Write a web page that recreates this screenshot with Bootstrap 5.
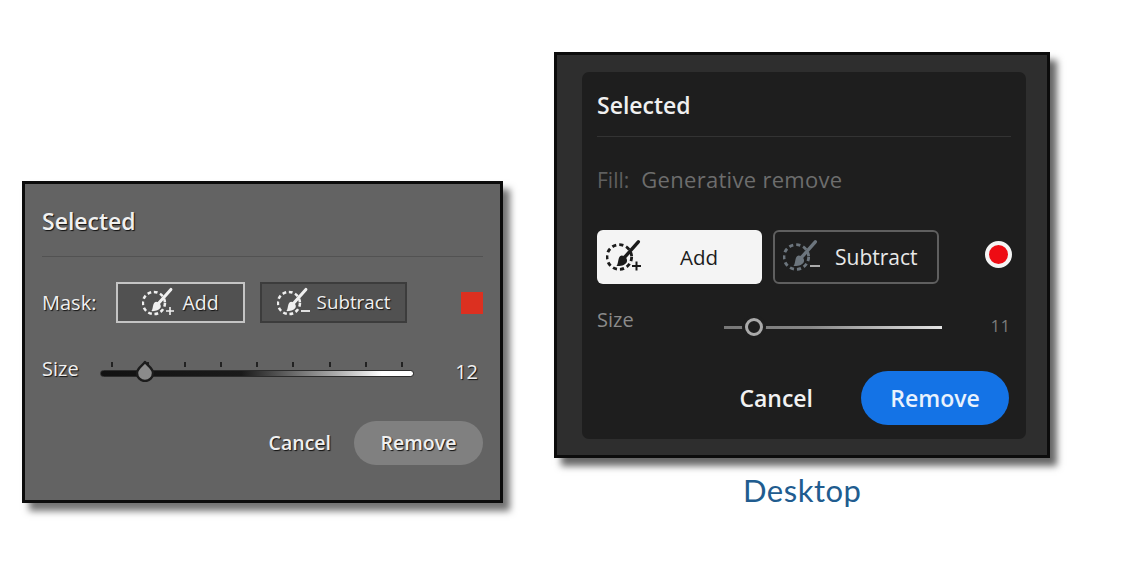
<!DOCTYPE html>
<html lang="en">
<head>
  <meta charset="UTF-8" />
  <meta name="viewport" content="width=device-width, initial-scale=1.0"/>
  <title>Selected panels</title>
  <link href="https://cdn.jsdelivr.net/npm/bootstrap@5.3.0/dist/css/bootstrap.min.css" rel="stylesheet" />
  <style>
    body {
      background-color: #fff;
      font-family: "Open Sans", "Noto Sans", sans-serif;
      overflow: hidden;
    }
    .stage { padding-left: 22px; gap: 51px; height: 581px; }

    /* left panel (grey) */
    .panel-grey {
      width: 481px; height: 322px; margin-top: 181px;
      background-color: #636363; border: 3px solid #0c0c0c;
      box-shadow: 7px 8px 7px rgba(0,0,0,.55);
      padding: 0 17px 0 17px; color: #f0f0f0;
      text-shadow: 1px 1px 1px #111;
    }
    .panel-grey .title { font-size: 23px; font-weight: 600; line-height: 30px; margin-top: 22px; }
    .panel-grey .rule { height: 1px; background-color: #525252; margin-top: 20px; }
    .mask-row { margin-top: 25px; height: 41px; }
    .mask-label { font-size: 20px; width: 74px; }
    .mode-btn {
      border-radius: 0; height: 41px; padding: 0; font-size: 19.5px; line-height: 1;
      color: #f0f0f0; background-color: #515151; text-shadow: inherit;
      display: flex; align-items: center; justify-content: center; gap: 6px;
    }
    .mode-add { width: 129px; border: 2px solid #c4c4c4; }
    .mode-sub { width: 147px; border: 2px solid #3c3c3c; margin-left: 15px; font-size: 18.8px; }
    .swatch { width: 22px; height: 22px; background-color: #dc3020; margin-left: auto; }
    .size-row { margin-top: 27px; height: 40px; }
    .size-label { font-size: 20px; width: 58px; margin-top: -2px; }
    .slider-grey { width: 314px; position: relative; height: 24px; margin-top: 8px; }
    .tick-row { padding: 0 11px; height: 5px; }
    .tick-row span { width: 2px; height: 5px; background-color: #222; }
    .track-grey {
      height: 7px; margin-top: 3px; border-radius: 4px; border: 1px solid #2c2c2c;
      background: linear-gradient(90deg, #111 0%, #1a1a1a 45%, #aaa 75%, #fff 90%);
    }
    .knob-grey { position: absolute; left: 34px; top: -2px; width: 22px; height: 22px; }
    .size-val { font-size: 20px; margin-left: auto; margin-right: 5px; margin-top: 3px; }
    .foot-grey { margin-top: 31px; }
    .cancel-grey { font-size: 19.5px; font-weight: 600; color: #f0f0f0; text-shadow: inherit; padding: 0; margin-right: 23px; border: 0; }
    .remove-grey {
      width: 129px; height: 44px; padding: 0; border: 0; border-radius: 22px;
      background-color: #808080; color: #f0f0f0; font-size: 19.5px; font-weight: 600; text-shadow: inherit;
    }

    /* right panel (dark) */
    .panel-dark {
      width: 496px; height: 406px; margin-top: 52px;
      background-color: #2e2e2e; border: 3px solid #0c0c0c;
      box-shadow: 7px 8px 7px rgba(0,0,0,.6);
      padding: 17px 21px 16px 25px;
    }
    .panel-inner {
      height: 367px; background-color: #1e1e1e; border-radius: 7px;
      padding: 0 15px; color: #f0f0f0;
    }
    .panel-inner .title { font-size: 23px; font-weight: 600; line-height: 30px; margin-top: 14px; }
    .panel-inner .rule { height: 1px; background-color: #333; margin-top: 16px; }
    .fill-row { margin-top: 27px; font-size: 22px; line-height: 30px; color: #6d6d6d; letter-spacing: .3px; }
    .fill-row .fill-label { font-size: 21px; margin-right: 12px; letter-spacing: 0; color: #5f5f5f; }
    .mode-row { margin-top: 35px; height: 54px; }
    .dark-btn {
      height: 54px; border-radius: 6px; padding: 0; font-size: 20.5px; line-height: 1;
      display: flex; align-items: center;
    }
    .dark-add { width: 165px; background-color: #f4f4f4; color: #1b1b1b; border: 0; padding-left: 9px; }
    .dark-add svg { margin-right: 36px; }
    .dark-sub { width: 166px; margin-left: 11px; background-color: transparent; color: #e8e8e8; border: 2px solid #5f5f5f; padding-left: 8px; font-size: 21px; }
    .dark-sub svg { margin-right: 14px; }
    .rec-dot {
      width: 27px; height: 27px; border-radius: 50%; background-color: #ee0c14;
      border: 4px solid #f4f4f4; margin-left: auto; margin-right: -1px; margin-top: -6px;
    }
    .size-dark { margin-top: 21px; height: 30px; position: relative; }
    .size-dark .lbl { font-size: 20px; color: #8a8a8a; width: 127px; margin-top: 0; }
    .slider-dark { width: 218px; height: 3px; position: relative; margin-top: 21px;
      background: linear-gradient(90deg, #777 0%, #888 40%, #e4e4e4 100%); }
    .knob-dark {
      position: absolute; left: 21px; top: -8px; width: 18px; height: 18px; border-radius: 50%;
      background-color: #1e1e1e; border: 3px solid #aaa; box-shadow: 0 0 0 3px #1e1e1e;
    }
    .val-dark { font-size: 16px; color: #7d7d7d; margin-left: auto; letter-spacing: 1px; margin-top: 9px; }
    .foot-dark { margin-top: 36px; padding-right: 2px; }
    .cancel-dark { font-size: 23px; font-weight: 600; color: #f2f2f2; padding: 0; border: 0; margin-right: 48px; }
    .remove-dark {
      width: 148px; height: 54px; padding: 0; border: 0; border-radius: 27px;
      background-color: #1473e6; color: #e9f2fd; font-size: 23px; font-weight: 600;
    }
    .caption { font-family: "Lato", sans-serif; font-size: 31px; line-height: 36px; color: #215c8f; margin-top: 14px; letter-spacing: .5px; padding-left: 189px; }
  </style>
</head>
<body>

  <svg width="0" height="0" class="d-block">
    <symbol id="brush" viewBox="0 0 40 40">
      <circle cx="14" cy="20" r="13" fill="none" stroke="currentColor" stroke-width="3" stroke-dasharray="4.4 3.2"/>
      <path d="M34 4 19 21" fill="none" stroke="currentColor" stroke-width="3.6" stroke-linecap="round"/>
      <path d="M16.500 18.500c3.500 0 6.500 3.500 5.500 6.500-1 3-6 5-11 4.500 2.500-2 1-10.500 5.500-11z" fill="currentColor"/>
    </symbol>
  </svg>

  <div class="stage d-flex align-items-start">

    <!-- grey panel -->
    <div class="panel-grey flex-shrink-0">
      <div class="title">Selected</div>
      <div class="rule"></div>
      <div class="mask-row d-flex align-items-center">
        <span class="mask-label">Mask:</span>
        <button class="btn mode-btn mode-add">
          <svg width="34" height="34"><use href="#brush"/><path d="M24 25h8M28 21v8" stroke="currentColor" stroke-width="1.6"/></svg>
          <span>Add</span>
        </button>
        <button class="btn mode-btn mode-sub">
          <svg width="34" height="34"><use href="#brush"/><path d="M24 25h9" stroke="currentColor" stroke-width="1.8"/></svg>
          <span>Subtract</span>
        </button>
        <span class="swatch"></span>
      </div>
      <div class="size-row d-flex align-items-center">
        <span class="size-label">Size</span>
        <div class="slider-grey">
          <div class="tick-row d-flex justify-content-between">
            <span></span><span></span><span></span><span></span><span></span><span></span><span></span><span></span><span></span>
          </div>
          <div class="track-grey"></div>
          <svg class="knob-grey" viewBox="0 0 22 22">
            <path d="M11 2 C13 5 19 8 19 13 A8 8 0 0 1 3 13 C3 8 9 5 11 2 Z" fill="#8b8b8b" stroke="#1c1c1c" stroke-width="2.4" stroke-linejoin="round"/>
          </svg>
        </div>
        <span class="size-val">12</span>
      </div>
      <div class="foot-grey d-flex justify-content-end align-items-center">
        <button class="btn cancel-grey">Cancel</button>
        <button class="btn remove-grey">Remove</button>
      </div>
    </div>

    <!-- dark panel -->
    <div class="flex-shrink-0">
      <div class="panel-dark">
        <div class="panel-inner pt-1">
          <div class="title">Selected</div>
          <div class="rule"></div>
          <div class="fill-row"><span class="fill-label">Fill:</span>Generative remove</div>
          <div class="mode-row d-flex align-items-center">
            <button class="btn dark-btn dark-add">
              <svg width="38" height="38"><use href="#brush"/><path d="M26 28h9M30.500 23.500v9" stroke="currentColor" stroke-width="2"/></svg>
              <span>Add</span>
            </button>
            <button class="btn dark-btn dark-sub">
              <svg width="38" height="38" class="text-secondary"><use href="#brush"/><path d="M27 28h10" stroke="#bbb" stroke-width="1.8"/></svg>
              <span>Subtract</span>
            </button>
            <span class="rec-dot"></span>
          </div>
          <div class="size-dark d-flex">
            <span class="lbl">Size</span>
            <div class="slider-dark"><span class="knob-dark"></span></div>
            <span class="val-dark">11</span>
          </div>
          <div class="foot-dark d-flex justify-content-end align-items-center">
            <button class="btn cancel-dark">Cancel</button>
            <button class="btn remove-dark">Remove</button>
          </div>
        </div>
      </div>
      <div class="caption">Desktop</div>
    </div>

  </div>

  <script src="https://cdn.jsdelivr.net/npm/bootstrap@5.3.0/dist/js/bootstrap.bundle.min.js"></script>
</body>
</html>
